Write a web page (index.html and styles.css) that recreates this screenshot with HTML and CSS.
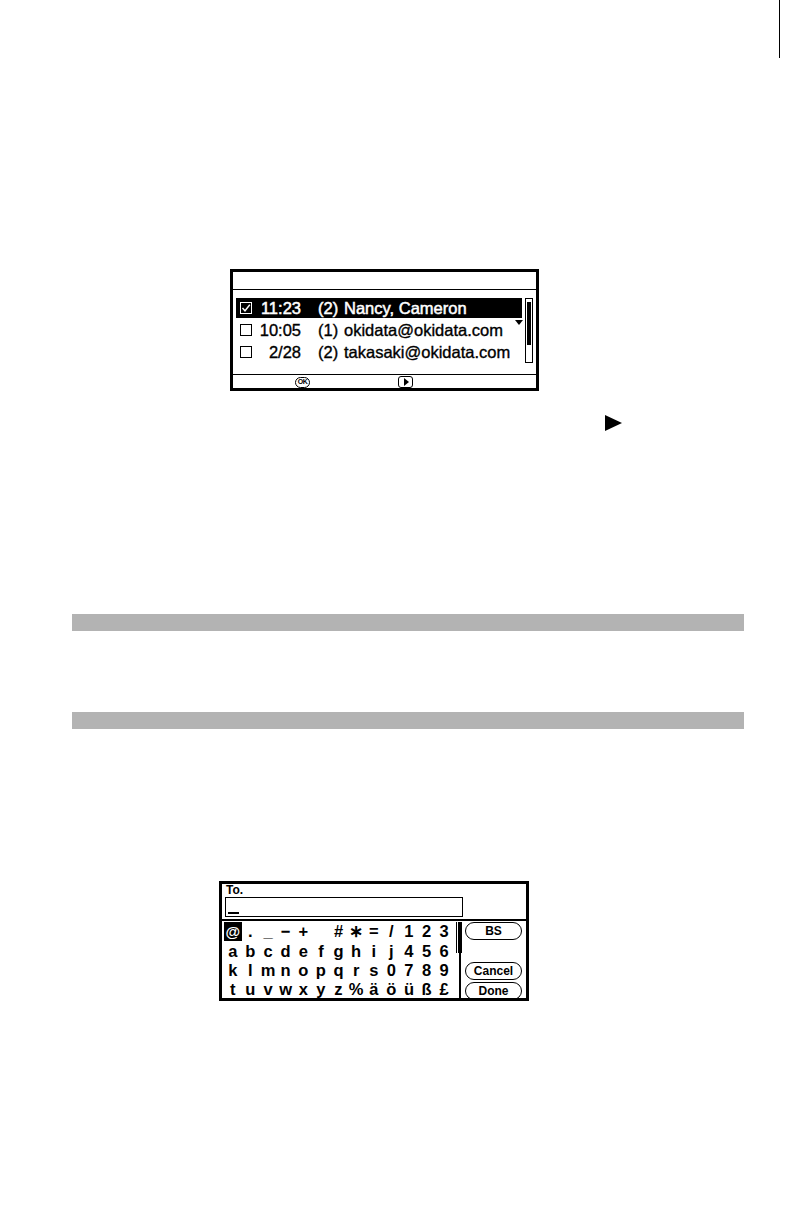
FILE: index.html
```html
<!DOCTYPE html>
<html>
<head>
<meta charset="utf-8">
<link rel="stylesheet" href="styles.css">
</head>
<body>
<div class="page">
  <div class="crop"></div>

  <div class="lcd1">
    <div class="lcd1-head"></div>
    <div class="lcd1-body">
      <div class="list">
        <div class="row sel">
          <svg class="chk" width="12" height="12" viewBox="0 0 12 12"><rect x="0.5" y="0.5" width="11" height="11" fill="none" stroke="#fff" stroke-width="1"/><path d="M2.5 6 L5 8.8 L9.8 2.8" fill="none" stroke="#fff" stroke-width="1.4"/></svg>
          <span class="time">11:23</span><span class="cnt">(2)</span><span class="name">Nancy, Cameron</span>
        </div>
        <div class="row">
          <svg class="chk" width="12" height="12" viewBox="0 0 12 12"><rect x="0.5" y="0.5" width="11" height="11" fill="none" stroke="#000" stroke-width="1"/></svg>
          <span class="time">10:05</span><span class="cnt">(1)</span><span class="name">okidata@okidata.com</span>
        </div>
        <div class="row">
          <svg class="chk" width="12" height="12" viewBox="0 0 12 12"><rect x="0.5" y="0.5" width="11" height="11" fill="none" stroke="#000" stroke-width="1"/></svg>
          <span class="time">2/28</span><span class="cnt">(2)</span><span class="name">takasaki@okidata.com</span>
        </div>
      </div>
      <div class="sb"><div class="sb-thumb"></div></div>
      <div class="more"></div>
    </div>
    <div class="lcd1-foot">
      <span class="ok">OK</span>
      <span class="play"><span class="play-tri"></span></span>
    </div>
  </div>

  <div class="arrow-row"><span class="arrow"></span></div>

  <div class="bar bar1"></div>
  <div class="bar bar2"></div>

  <div class="lcd2">
    <div class="to">To.</div>
    <div class="input"><span class="cursor"></span></div>
    <div class="kb-area">
      <div class="grid">
        <span class="key hl">@</span><span class="key">.</span><span class="key">_</span><span class="key">−</span><span class="key">+</span><span class="key"></span><span class="key">#</span><span class="key">∗</span><span class="key">=</span><span class="key">/</span><span class="key">1</span><span class="key">2</span><span class="key">3</span>
        <span class="key">a</span><span class="key">b</span><span class="key">c</span><span class="key">d</span><span class="key">e</span><span class="key">f</span><span class="key">g</span><span class="key">h</span><span class="key">i</span><span class="key">j</span><span class="key">4</span><span class="key">5</span><span class="key">6</span>
        <span class="key">k</span><span class="key">l</span><span class="key">m</span><span class="key">n</span><span class="key">o</span><span class="key">p</span><span class="key">q</span><span class="key">r</span><span class="key">s</span><span class="key">0</span><span class="key">7</span><span class="key">8</span><span class="key">9</span>
        <span class="key">t</span><span class="key">u</span><span class="key">v</span><span class="key">w</span><span class="key">x</span><span class="key">y</span><span class="key">z</span><span class="key">%</span><span class="key">ä</span><span class="key">ö</span><span class="key">ü</span><span class="key">ß</span><span class="key">£</span>
      </div>
      <div class="sb2"><div class="sb2-thumb"></div></div>
      <div class="btns">
        <div class="btn">BS</div>
        <div class="btn btn-cancel">Cancel</div>
        <div class="btn btn-done">Done</div>
      </div>
    </div>
  </div>
</div>
</body>
</html>
```

FILE: styles.css
```css
html, body {
  margin: 0;
  padding: 0;
  background: #fff;
}
body {
  font-family: "Liberation Sans", Arial, sans-serif;
  color: #000;
}
.page {
  position: relative;
  width: 792px;
  height: 1224px;
  overflow: hidden;
}
.crop {
  position: absolute;
  left: 779px;
  top: 0;
  width: 1px;
  height: 58px;
  background: #000;
}

/* ---------- first LCD screen ---------- */
.lcd1 {
  margin: 269px 0 0 230px;
  width: 309px;
  height: 122px;
  box-sizing: border-box;
  border: 3px solid #000;
  display: flex;
  flex-direction: column;
  overflow: hidden;
}
.lcd1-head {
  flex: none;
  height: 17px;
  border-bottom: 1px solid #000;
}
.lcd1-body {
  flex: 1;
  position: relative;
  display: flex;
  align-items: flex-start;
  gap: 3px;
  padding: 8px 3px 0 3px;
}
.list {
  width: 287px;
  display: flex;
  flex-direction: column;
  gap: 2px;
}
.row {
  height: 20px;
  display: flex;
  align-items: center;
  padding-left: 4px;
  font-size: 16.5px;
  white-space: nowrap;
  -webkit-text-stroke: 0.35px currentColor;
}
.row.sel {
  background: #000;
  color: #fff;
  -webkit-text-stroke: 0.5px #fff;
}
.chk {
  flex: none;
  display: block;
}
.time {
  width: 45px;
  margin-left: 4px;
  text-align: right;
}
.cnt {
  margin-left: 17px;
  width: 18px;
}
.name {
  margin-left: 8px;
}
.sb {
  width: 8px;
  height: 65px;
  box-sizing: border-box;
  border: 1px solid #000;
  padding: 3px 1px;
}
.sb-thumb {
  height: 43px;
  background: #000;
}
.more {
  position: absolute;
  left: 282px;
  top: 30px;
  width: 0;
  height: 0;
  border-left: 4px solid transparent;
  border-right: 4px solid transparent;
  border-top: 5px solid #000;
}
.lcd1-foot {
  flex: none;
  height: 13px;
  border-top: 1px solid #000;
  display: flex;
  align-items: flex-end;
  padding-left: 62px;
  gap: 88px;
}
.ok {
  width: 15px;
  height: 11px;
  box-sizing: border-box;
  border: 1.5px solid #000;
  border-radius: 6px;
  font-size: 7px;
  font-weight: bold;
  line-height: 8px;
  text-align: center;
  letter-spacing: -0.5px;
}
.play {
  width: 15px;
  height: 12px;
  box-sizing: border-box;
  border: 1.5px solid #000;
  border-radius: 3px;
  display: flex;
  align-items: center;
  justify-content: center;
}
.play-tri {
  width: 0;
  height: 0;
  border-left: 5px solid #000;
  border-top: 4px solid transparent;
  border-bottom: 4px solid transparent;
  margin-left: 1px;
}

/* ---------- arrow ---------- */
.arrow-row {
  margin-top: 24px;
  padding-left: 605px;
  height: 17px;
}
.arrow {
  display: block;
  width: 0;
  height: 0;
  border-left: 17px solid #000;
  border-top: 8.5px solid transparent;
  border-bottom: 8.5px solid transparent;
}

/* ---------- grey bars ---------- */
.bar {
  margin-left: 72px;
  width: 672px;
  height: 17px;
  background: #b3b3b3;
}
.bar1 {
  margin-top: 182px;
}
.bar2 {
  margin-top: 81px;
}

/* ---------- second LCD screen ---------- */
.lcd2 {
  margin: 152px 0 0 219px;
  width: 310px;
  height: 120px;
  box-sizing: border-box;
  border: 3px solid #000;
  overflow: hidden;
}
.to {
  height: 13px;
  line-height: 13px;
  padding-left: 4px;
  font-size: 12px;
  font-weight: bold;
}
.input {
  margin-left: 3px;
  width: 238px;
  height: 20px;
  box-sizing: border-box;
  border: 1px solid #000;
  position: relative;
}
.cursor {
  position: absolute;
  left: 2px;
  bottom: 2px;
  width: 11px;
  height: 2px;
  background: #000;
}
.kb-area {
  margin-top: 2px;
  border-top: 2px solid #000;
  display: flex;
  align-items: flex-start;
  padding-top: 1px;
  height: 80px;
}
.grid {
  margin-left: 2px;
  width: 229px;
  display: grid;
  grid-template-columns: repeat(13, 1fr);
  grid-auto-rows: 19.3px;
  font-size: 16.5px;
  font-weight: bold;
}
.key {
  display: flex;
  align-items: center;
  justify-content: center;
  line-height: 1;
}
.key.hl {
  background: #000;
  color: #fff;
  font-size: 15px;
}
.sb2 {
  position: relative;
  margin-left: 2px;
  width: 7px;
  height: 80px;
}
.sb2::before {
  content: "";
  position: absolute;
  left: 4px;
  top: 0;
  width: 2px;
  height: 100%;
  background: #000;
}
.sb2-thumb {
  position: absolute;
  left: 1px;
  top: 0;
  width: 6px;
  height: 31px;
  box-sizing: border-box;
  border-left: 1px solid #000;
  border-right: 4px solid #000;
}
.btns {
  margin-left: 3px;
  width: 57px;
  display: flex;
  flex-direction: column;
}
.btn {
  height: 18px;
  box-sizing: border-box;
  border: 1px solid #000;
  border-radius: 9px;
  font-size: 12px;
  font-weight: bold;
  display: flex;
  align-items: center;
  justify-content: center;
}
.btn-cancel {
  margin-top: 22px;
}
.btn-done {
  margin-top: 2px;
}
```
